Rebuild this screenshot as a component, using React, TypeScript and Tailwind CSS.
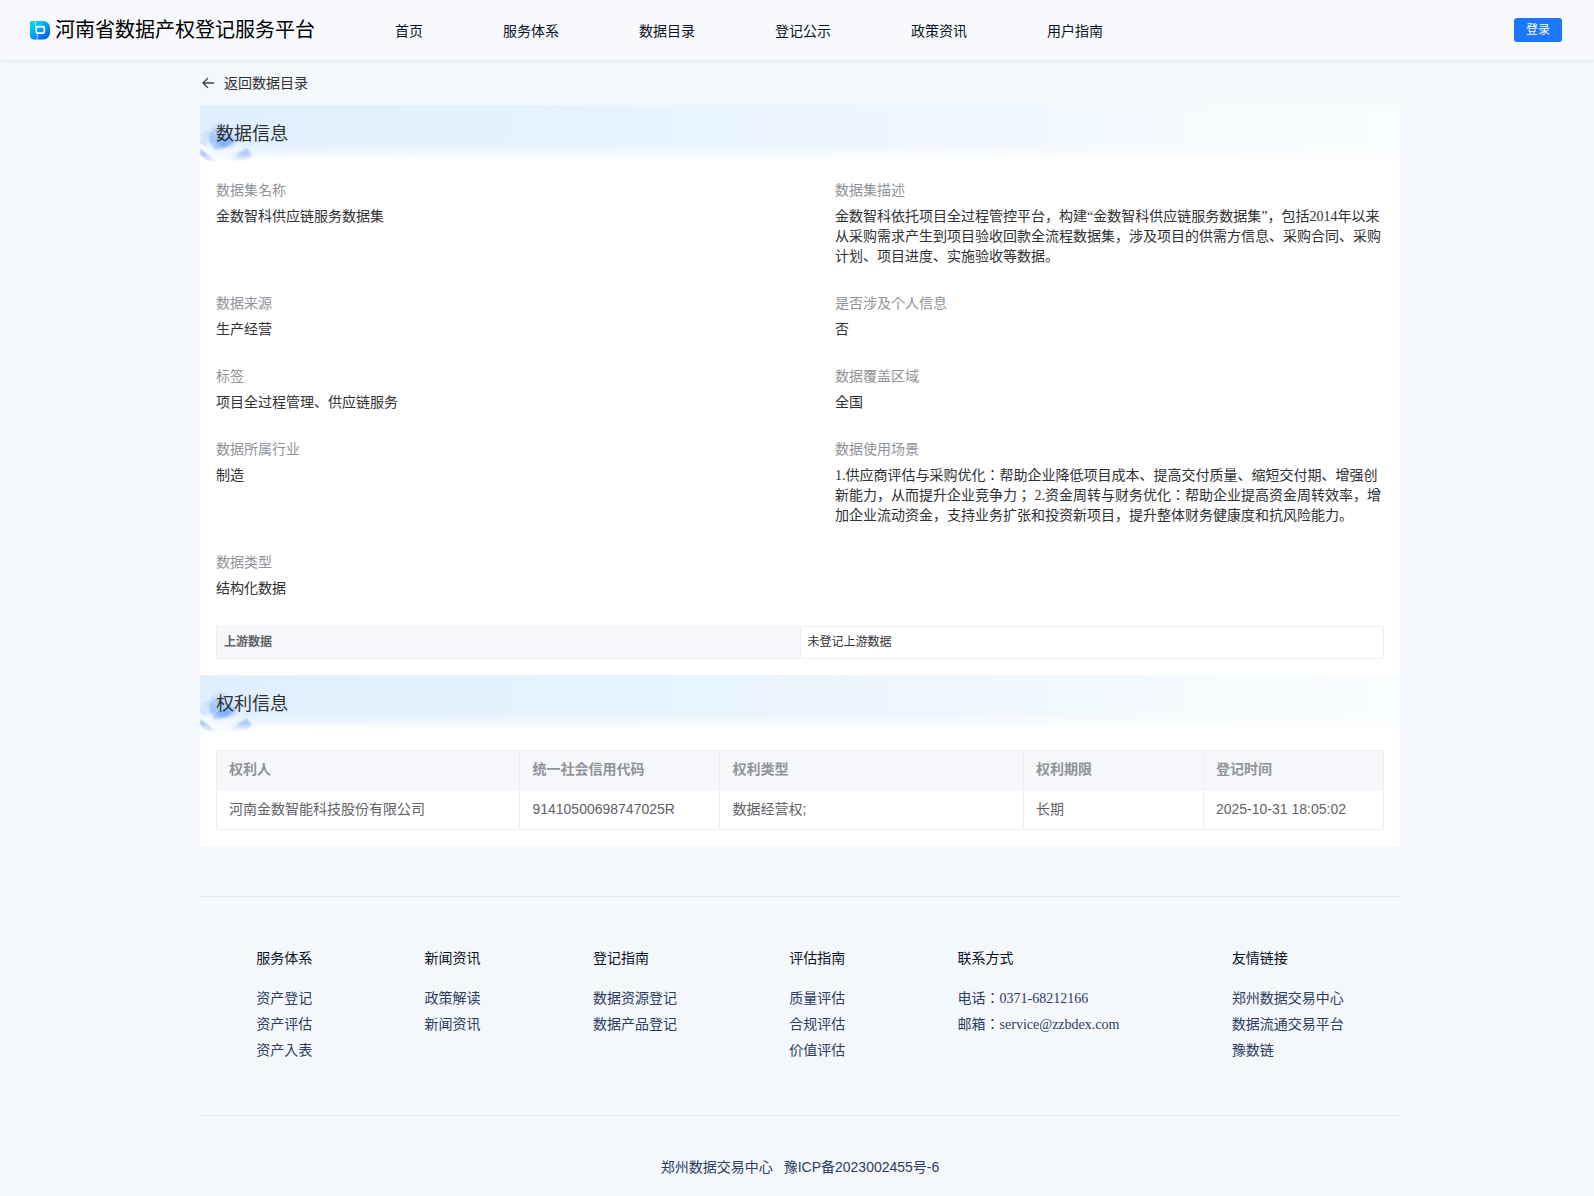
import clsx from 'clsx'

const navItems = ['首页', '服务体系', '数据目录', '登记公示', '政策资讯', '用户指南']

const details = [
  { label: '数据集名称', value: '金数智科供应链服务数据集' },
  {
    label: '数据集描述',
    value:
      '金数智科依托项目全过程管控平台，构建“金数智科供应链服务数据集”，包括2014年以来从采购需求产生到项目验收回款全流程数据集，涉及项目的供需方信息、采购合同、采购计划、项目进度、实施验收等数据。',
  },
  { label: '数据来源', value: '生产经营' },
  { label: '是否涉及个人信息', value: '否' },
  { label: '标签', value: '项目全过程管理、供应链服务' },
  { label: '数据覆盖区域', value: '全国' },
  { label: '数据所属行业', value: '制造' },
  {
    label: '数据使用场景',
    value:
      '1.供应商评估与采购优化：帮助企业降低项目成本、提高交付质量、缩短交付期、增强创新能力，从而提升企业竞争力； 2.资金周转与财务优化：帮助企业提高资金周转效率，增加企业流动资金，支持业务扩张和投资新项目，提升整体财务健康度和抗风险能力。',
  },
  { label: '数据类型', value: '结构化数据' },
]

const rightsColumns = [
  { title: '权利人', width: 'w-[26%]' },
  { title: '统一社会信用代码', width: 'w-[200px]' },
  { title: '权利类型', width: 'w-[26%]' },
  { title: '权利期限', width: 'w-[180px]' },
  { title: '登记时间', width: 'w-[180px]' },
]

const rightsRows = [
  ['河南金数智能科技股份有限公司', '91410500698747025R', '数据经营权;', '长期', '2025-10-31 18:05:02'],
]

const footerGroups = [
  { title: '服务体系', links: ['资产登记', '资产评估', '资产入表'] },
  { title: '新闻资讯', links: ['政策解读', '新闻资讯'] },
  { title: '登记指南', links: ['数据资源登记', '数据产品登记'] },
  { title: '评估指南', links: ['质量评估', '合规评估', '价值评估'] },
  { title: '联系方式', texts: ['电话：0371-68212166', '邮箱：service@zzbdex.com'] },
  { title: '友情链接', links: ['郑州数据交易中心', '数据流通交易平台', '豫数链'] },
]

const sans = "font-['Liberation_Sans','Noto_Sans_CJK_JP',sans-serif]"
const serif = "font-['Liberation_Serif','Noto_Sans_CJK_JP',serif]"

function Logo() {
  return (
    <svg viewBox="0 0 20 20" className="size-5 shrink-0" aria-hidden="true">
      <defs>
        <linearGradient id="logo-fill" x1="0" y1="0" x2="0.8" y2="1">
          <stop offset="0" stopColor="#04e6d8" />
          <stop offset="0.5" stopColor="#06a4fa" />
          <stop offset="1" stopColor="#0558fb" />
        </linearGradient>
      </defs>
      <path
        fill="url(#logo-fill)"
        d="M1 1h12.500A6.500 6.500 0 0 1 20 7.500v5.500a6.500 6.500 0 0 1-6.500 6.500H4a4 4 0 0 1-4-4V2a1 1 0 0 1 1-1z"
      />
      <rect x="6.300" y="6.600" width="8" height="6.600" rx="1.400" fill="none" stroke="#fff" strokeWidth="1.700" />
      <path d="M5.300 1v5.500M7.300 13.300v6.200" fill="none" stroke="#fff" strokeOpacity="0.7" strokeWidth="1" />
    </svg>
  )
}

function BannerArt() {
  return (
    <svg viewBox="0 0 54 58" className="absolute bottom-0 left-0 h-full" aria-hidden="true">
      <defs>
        <filter id="soft" x="-20%" y="-20%" width="140%" height="140%">
          <feGaussianBlur stdDeviation="1.2" />
        </filter>
      </defs>
      <g filter="url(#soft)">
        <path d="M20 14 44 32 24 48 0 30z" fill="#d0e4fc" />
        <path d="M0 36l24 20-9 2L0 54z" fill="#f8fbff" />
        <path d="M10 27l7-4 9 5 11 7-10 8-12 1-6-8z" fill="#a5c9fa" />
        <path d="M14 37l9-5 11 4-10 7z" fill="#84b3f7" />
        <path d="M1 33l7 5-3 3-5-4z" fill="#c4dcfb" />
        <path d="M14 47l13-5 14 5-15 11z" fill="#eef6ff" />
      </g>
      <g filter="url(#soft)" fill="#9cc1f7">
        <path d="M0 44l18 14h-8L0 50z" />
        <path d="M36 50l11-7 5 8-8 5z" fillOpacity="0.8" />
        <path d="M30 55l8-5 4 4-4 3z" fillOpacity="0.6" />
      </g>
      <path
        d="M2 28 20 14l19 15M1 34l21 18M23 51l22-14M7 22l16 13M12 40l18-13M20 56l20-16"
        fill="none"
        stroke="#fff"
        strokeOpacity="0.5"
      />
    </svg>
  )
}

function SectionBanner({ title }: { title: string }) {
  return (
    <div className="relative h-[58px] bg-linear-to-r from-[#dfeffd] via-[#eaf5fe] to-[#fafdff]">
      <div className="absolute inset-x-0 bottom-0 h-5 bg-linear-to-b from-white/0 to-white" />
      <BannerArt />
      <div className="absolute inset-x-0 bottom-0 h-2.5 bg-linear-to-b from-white/0 to-white" />
      <h2 className="relative px-4 pt-[17px] text-lg leading-6 text-[#303133]">{title}</h2>
    </div>
  )
}

function Header() {
  return (
    <header className="relative flex h-[60px] items-center bg-[#f7f9fc] pr-8 pl-[30px] shadow-[0_1px_4px_rgba(0,21,41,0.08)]">
      <Logo />
      <span className="ml-[5px] text-xl text-black">河南省数据产权登记服务平台</span>
      <nav className="ml-20 flex gap-20 pt-0.5 text-sm text-[#0b1226]">
        {navItems.map((item) => (
          <a key={item} href="#">
            {item}
          </a>
        ))}
      </nav>
      <button type="button" className="ml-auto h-6 rounded-[3px] bg-[#1b77ff] px-3 text-xs text-white">
        登录
      </button>
    </header>
  )
}

function Footer() {
  return (
    <footer className="mt-[50px] text-sm text-[#2c3d5f]">
      <div className="flex justify-around border-y border-[#e1e6ee] pt-[51px] pb-[54px]">
        {footerGroups.map((group) => (
          <div key={group.title}>
            <h3 className="mb-[21px] leading-5 text-[#0b1226]">{group.title}</h3>
            <ul className={clsx('grid gap-1.5 leading-5', serif)}>
              {group.links?.map((link) => (
                <li key={link}>
                  <a href="#">{link}</a>
                </li>
              ))}
              {group.texts?.map((text) => (
                <li key={text}>{text}</li>
              ))}
            </ul>
          </div>
        ))}
      </div>
      <p className="flex justify-center gap-[11px] pt-[41px] pb-[19px] leading-5">
        <span>郑州数据交易中心</span>
        <a href="#">豫ICP备2023002455号-6</a>
      </p>
    </footer>
  )
}

export default function App() {
  return (
    <div className={clsx('min-h-screen bg-[#f4f7fc]', sans)}>
      <Header />
      <div className="pl-1.5">
        <div className="mx-auto max-w-[1200px]">
          <a href="#" className="flex h-[45px] items-center gap-2 text-sm text-[#303133]">
            <svg
              viewBox="0 0 1024 1024"
              className="size-4"
              fill="currentColor"
              stroke="currentColor"
              strokeWidth="24"
              aria-hidden="true"
            >
              <path d="M224 480h640a32 32 0 1 1 0 64H224a32 32 0 0 1 0-64" />
              <path d="m237.248 512 265.408 265.344a32 32 0 0 1-45.312 45.312l-288-288a32 32 0 0 1 0-45.312l288-288a32 32 0 1 1 45.312 45.312z" />
            </svg>
            返回数据目录
          </a>

          <main className="bg-white pb-4">
            <SectionBanner title="数据信息" />
            <dl className={clsx('grid grid-cols-2 gap-x-[70px] gap-y-[27px] px-4 pt-[18px] text-sm leading-5', serif)}>
              {details.map((item) => (
                <div key={item.label}>
                  <dt className="mb-1.5 text-[#909399]">{item.label}</dt>
                  <dd className="text-[#303133]">{item.value}</dd>
                </div>
              ))}
            </dl>
            <div className="px-4 pt-[27px] pb-4">
              <table className="w-full table-fixed border-collapse text-left text-xs">
                <tbody>
                  <tr className="h-8">
                    <th className="border border-[#ebeef5] bg-[#f5f7fa] px-[7px] pb-0.5 font-bold text-[#606266]">
                      上游数据
                    </th>
                    <td className="border border-[#ebeef5] px-[7px] pb-0.5 text-[#303133]">未登记上游数据</td>
                  </tr>
                </tbody>
              </table>
            </div>

            <SectionBanner title="权利信息" />
            <div className="px-4 pt-[17px]">
              <table className="w-full table-fixed border-collapse text-left text-sm">
                <thead>
                  <tr className="h-[39px] bg-[#f5f7fa] text-[#909399]">
                    {rightsColumns.map((col) => (
                      <th key={col.title} className={clsx('border border-[#ebeef5] px-3 pb-0.5 font-bold', col.width)}>
                        {col.title}
                      </th>
                    ))}
                  </tr>
                </thead>
                <tbody className="text-[#606266]">
                  {rightsRows.map((row) => (
                    <tr key={row[1]} className="h-10">
                      {row.map((cell) => (
                        <td key={cell} className="border border-[#ebeef5] px-3 pb-0.5">
                          {cell}
                        </td>
                      ))}
                    </tr>
                  ))}
                </tbody>
              </table>
            </div>
          </main>

          <Footer />
        </div>
      </div>
    </div>
  )
}
